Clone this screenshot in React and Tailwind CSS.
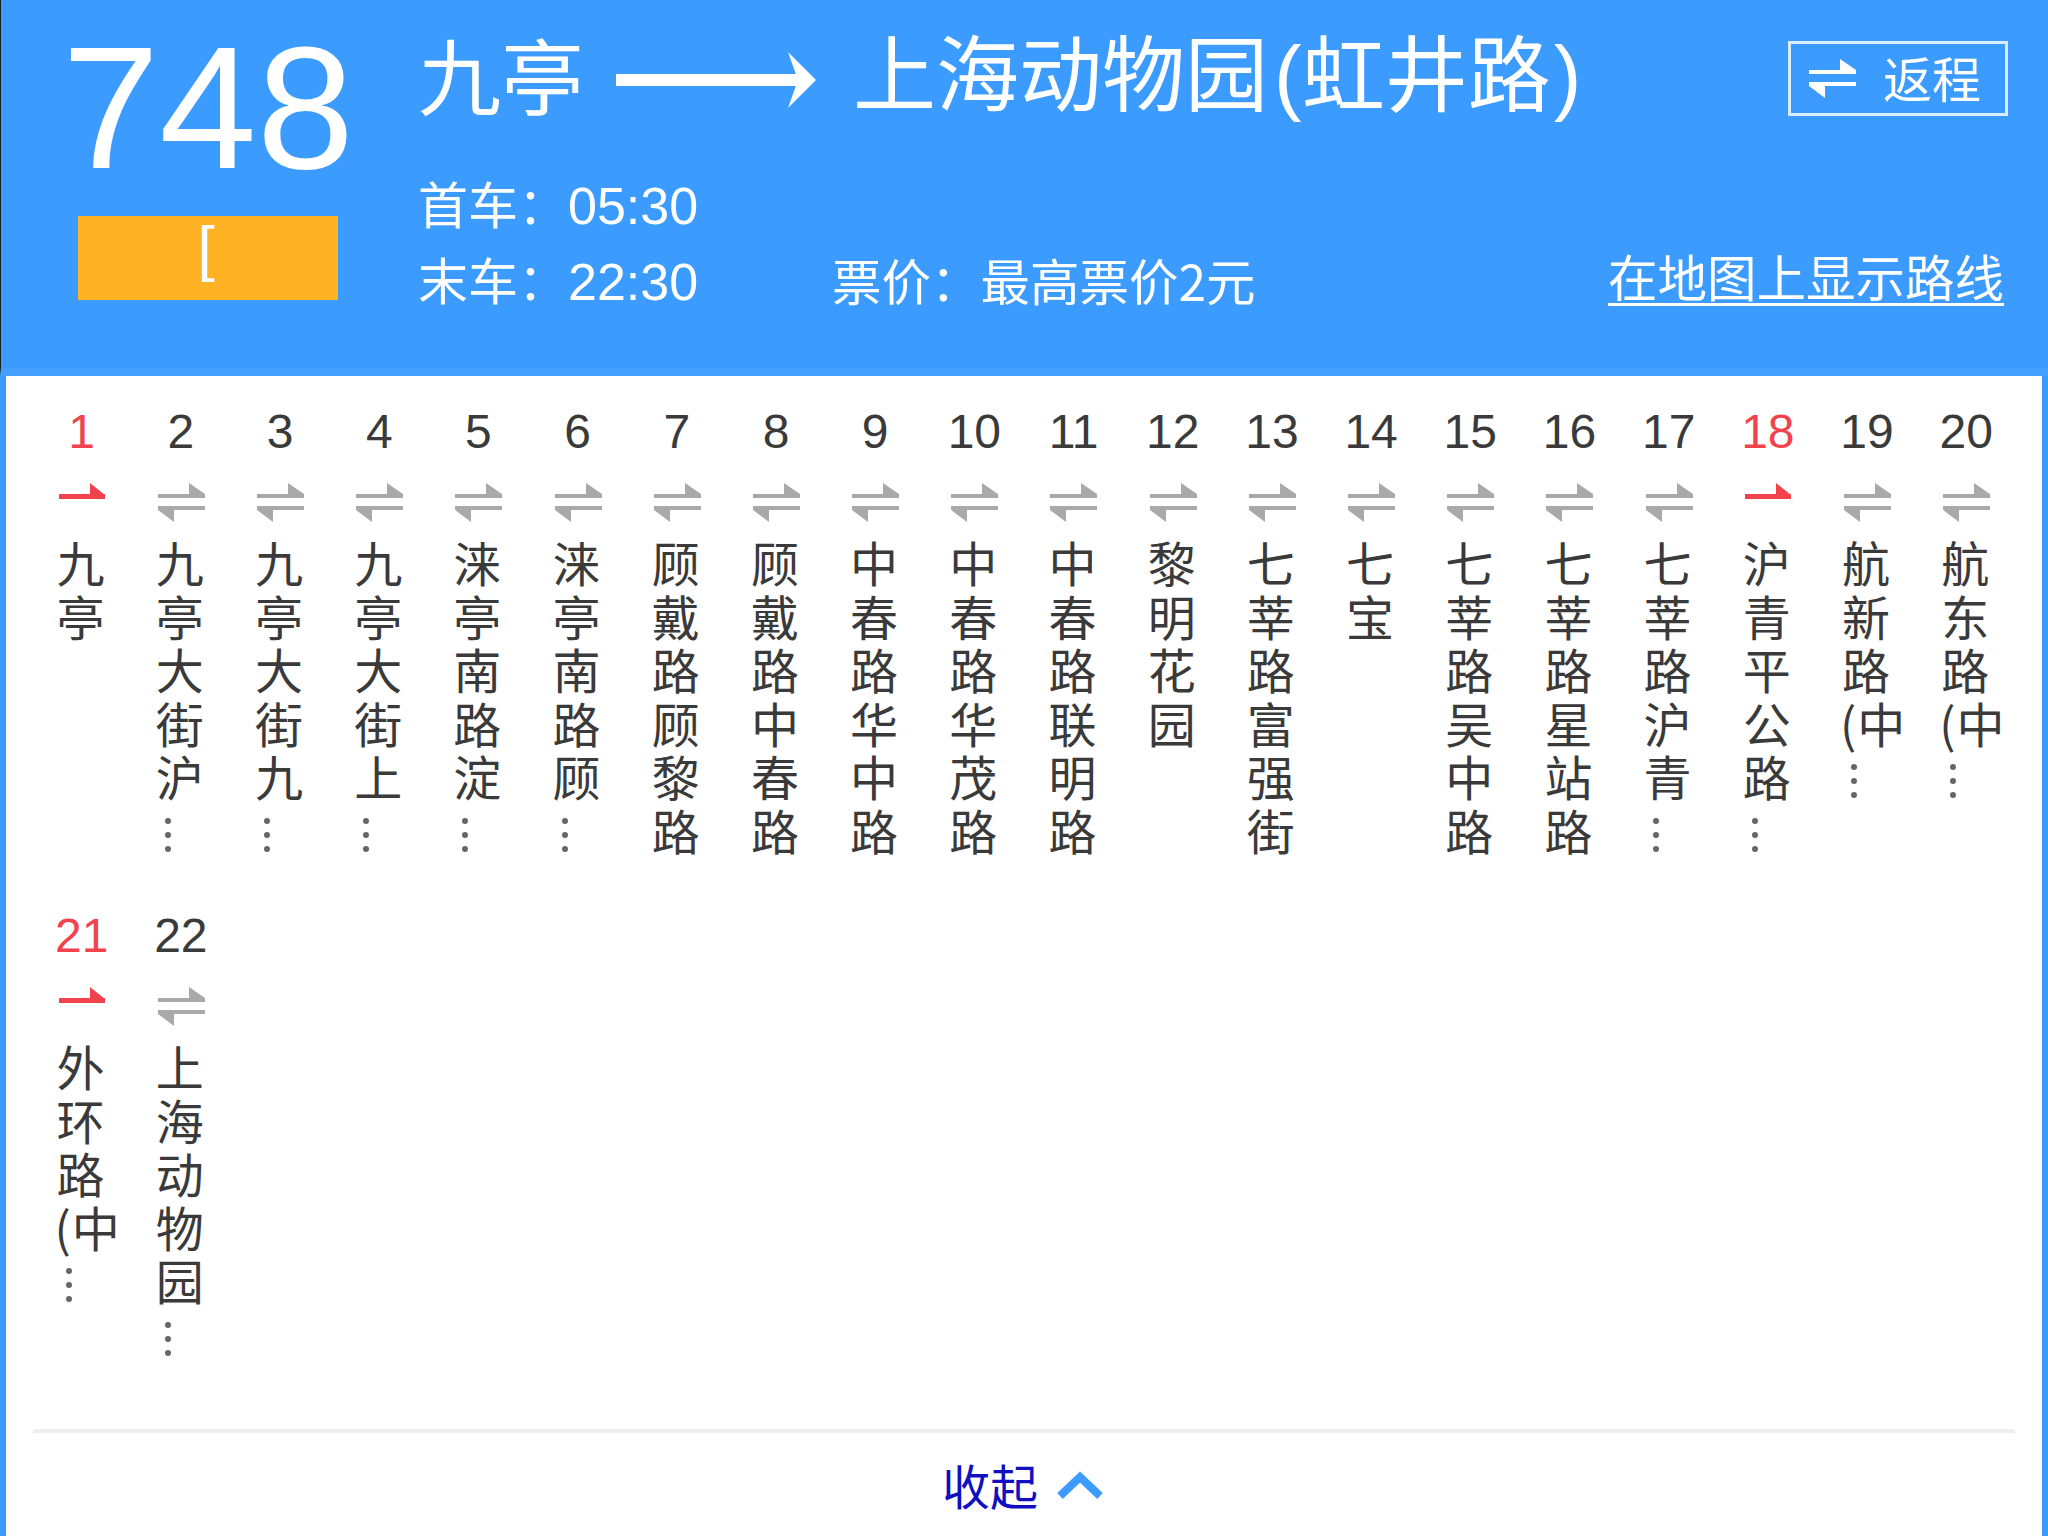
const stations = [
  { n: 1, name: "九亭", red: true },
  { n: 2, name: "九亭大街沪", more: true },
  { n: 3, name: "九亭大街九", more: true },
  { n: 4, name: "九亭大街上", more: true },
  { n: 5, name: "涞亭南路淀", more: true },
  { n: 6, name: "涞亭南路顾", more: true },
  { n: 7, name: "顾戴路顾黎路" },
  { n: 8, name: "顾戴路中春路" },
  { n: 9, name: "中春路华中路" },
  { n: 10, name: "中春路华茂路" },
  { n: 11, name: "中春路联明路" },
  { n: 12, name: "黎明花园" },
  { n: 13, name: "七莘路富强街" },
  { n: 14, name: "七宝" },
  { n: 15, name: "七莘路吴中路" },
  { n: 16, name: "七莘路星站路" },
  { n: 17, name: "七莘路沪青", more: true },
  { n: 18, name: "沪青平公路", red: true, more: true },
  { n: 19, name: "航新路", extra: "(中", more: true },
  { n: 20, name: "航东路", extra: "(中", more: true },
  { n: 21, name: "外环路", extra: "(中", red: true, more: true },
  { n: 22, name: "上海动物园", more: true },
];

function TwoWay({ color = "#a9a9a9", className = "" }) {
  return (
    <svg viewBox="0 0 47 39" className={className} fill={color}>
      <path d="M0 11h47v4H0z" />
      <path d="M31 0l16 11H31z" />
      <path d="M0 23h47v4H0z" />
      <path d="M0 27h16v12z" />
    </svg>
  );
}

function OneWay() {
  return (
    <svg viewBox="0 0 47 17" className="w-[47px] h-[17px]" fill="#f2434d">
      <path d="M0 11h46v5H0z" />
      <path d="M31 0l15 12H31z" />
    </svg>
  );
}

function Station({ s }) {
  return (
    <div className="h-[504px] flex flex-col">
      <div className={`h-[50px] mt-[31px] pl-[1px] text-center text-[48px] leading-[50px] font-['Liberation_Sans',sans-serif] ${s.red ? "text-[#f2434d]" : "text-[#3a3a3a]"}`}>
        {s.n}
      </div>
      <div className="h-[39px] mt-[26px] pl-[27px]">
        {s.red ? <OneWay /> : <TwoWay className="w-[47px] h-[39px]" />}
      </div>
      <div className="mt-[13px] pl-[25px] text-[48px] leading-[53.5px] text-[#3a3a3a] font-['Noto_Sans_CJK_SC',sans-serif] whitespace-nowrap">
        {[...s.name].map((c, i) => (
          <div key={i} className="h-[53.5px]">{c}</div>
        ))}
        {s.extra && <div className="h-[53.5px] -ml-[2px] tracking-[1px]">{s.extra}</div>}
      </div>
      {s.more && (
        <div className="ml-[34px] mt-[15px] flex flex-col gap-[8px] blur-[0.7px]">
          <span className="w-[6px] h-[6px] rounded-full bg-[#666]" />
          <span className="w-[6px] h-[6px] rounded-full bg-[#666]" />
          <span className="w-[6px] h-[6px] rounded-full bg-[#666]" />
        </div>
      )}
    </div>
  );
}

export default function App() {
  return (
    <div className="w-[2048px] h-[1536px] flex flex-col overflow-hidden bg-[#3b9bff] font-['Noto_Sans_CJK_SC',sans-serif]">
      <header className="h-[376px] shrink-0 flex text-white border-l border-[#14202c] border-b-[8px] border-b-[#449fff]">
        <div className="w-[420px] shrink-0 pl-[61px] pt-[20px] flex flex-col">
          <div className="h-[176px] text-[175px] leading-[176px] font-['Liberation_Sans',sans-serif]">748</div>
          <div className="ml-[16px] mt-[20px] w-[260px] h-[84px] bg-[#ffb223] flex justify-center pr-[4px]">
            <span className="text-[62px] leading-[64px] font-['Liberation_Sans',sans-serif]">[</span>
          </div>
        </div>
        <div className="flex-1 pt-[40px] pr-[40px] flex flex-col">
          <div className="h-[80px] flex items-center">
            <span className="text-[83px] leading-[80px] -ml-[3px] mb-[14px]">九亭</span>
            <svg viewBox="0 0 200 56" className="w-[200px] h-[56px] ml-[32px]" fill="white">
              <path d="M0 22h186v12H0z" />
              <path d="M172 0l28 28-28 28 10-28z" />
            </svg>
            <span className="ml-[37px] text-[83px] leading-[80px] whitespace-nowrap mb-[14px]">
              上海动物园<span className="font-['Liberation_Sans',sans-serif] ml-[6px]">(</span>虹井路<span className="font-['Liberation_Sans',sans-serif] ml-[3px]">)</span>
            </span>
            <div className="ml-auto mb-[3px] w-[220px] h-[75px] border-[3px] border-[#dcecff] flex items-center pl-[18px]">
              <TwoWay color="#ffffff" className="w-[47px] h-[39px]" />
              <span className="ml-[27px] text-[49px] leading-[60px] mb-[3px]">返程</span>
            </div>
          </div>
          <div className="mt-[52px] -ml-[3px] h-[60px] text-[50px] leading-[60px]">
            首车：<span className="text-[52px] font-['Liberation_Sans',sans-serif]">05:30</span>
          </div>
          <div className="mt-[18px] h-[60px] flex items-center text-[50px] leading-[60px]">
            <span className="w-[414px] -ml-[3px]">末车：<span className="text-[52px] font-['Liberation_Sans',sans-serif]">22:30</span></span>
            <span className="text-[49.5px]">票价：最高票价2元</span>
            <a className="ml-auto mr-[4px] mb-[8px] text-[49.5px] underline underline-offset-[6px] decoration-[3px]">在地图上显示路线</a>
          </div>
        </div>
      </header>
      <main className="flex-1 bg-white flex flex-col ml-[6px] mr-[6px]">
        <div className="pl-[25.6px] h-[1008px] grid grid-cols-[repeat(20,99.2px)] content-start">
          {stations.map((s) => (
            <Station key={s.n} s={s} />
          ))}
        </div>
        <div className="mt-[45px] ml-[27px] w-[1982px] h-[4px] bg-[#eeeeee]" />
        <div className="h-[103px] pl-[936px] pt-[19px] flex items-start text-[#1010c0] text-[48px] leading-[64px]">
          <span>收起</span>
          <svg viewBox="0 0 46 28" className="ml-[19px] mt-[19px] w-[46px] h-[28px]" fill="none" stroke="#3d9bff" strokeWidth="8">
            <path d="M3 25L23 6l20 19" />
          </svg>
        </div>
      </main>
    </div>
  );
}
